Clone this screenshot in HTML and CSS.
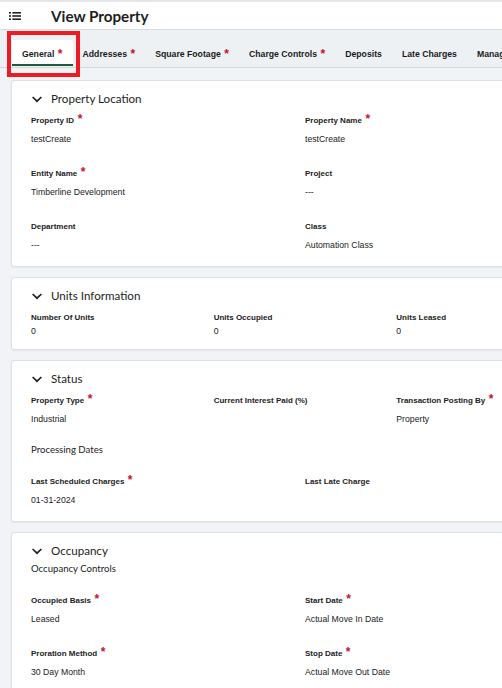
FILE: index.html
```html
<!DOCTYPE html>
<html lang="en">
<head>
<meta charset="utf-8">
<title>View Property</title>
<link rel="stylesheet" href="styles.css">
</head>
<body>
<header class="topbar">
  <button class="menu-btn" type="button" aria-label="Menu">
    <svg width="12" height="8" viewBox="0 0 12 8" aria-hidden="true">
      <rect x="0" y="0" width="2" height="1.6" fill="#222"/>
      <rect x="3.4" y="0" width="8.6" height="1.6" fill="#222"/>
      <rect x="0" y="3.2" width="2" height="1.6" fill="#222"/>
      <rect x="3.4" y="3.2" width="8.6" height="1.6" fill="#222"/>
      <rect x="0" y="6.4" width="2" height="1.6" fill="#222"/>
      <rect x="3.4" y="6.4" width="8.6" height="1.6" fill="#222"/>
    </svg>
  </button>
  <h1 class="page-title">View Property</h1>
</header>

<nav class="tabs">
  <a class="tab is-active">General<span class="req">*</span></a>
  <a class="tab">Addresses<span class="req">*</span></a>
  <a class="tab">Square Footage<span class="req">*</span></a>
  <a class="tab">Charge Controls<span class="req">*</span></a>
  <a class="tab">Deposits</a>
  <a class="tab">Late Charges</a>
  <a class="tab">Management</a>
  <span class="tab-highlight"></span>
</nav>

<main class="content">
  <section class="card">
    <h2 class="card-title">
      <svg class="chevron" width="12" height="12" viewBox="0 0 12 12" aria-hidden="true"><polyline points="1.6,4 6,8.2 10.4,4" fill="none" stroke="#222" stroke-width="1.7"/></svg>
      Property Location
    </h2>
    <div class="fields">
      <div class="field"><div class="label">Property ID<span class="req">*</span></div><div class="value">testCreate</div></div>
      <div class="field"><div class="label">Property Name<span class="req">*</span></div><div class="value">testCreate</div></div>
      <div class="field"><div class="label">Entity Name<span class="req">*</span></div><div class="value">Timberline Development</div></div>
      <div class="field"><div class="label">Project</div><div class="value">---</div></div>
      <div class="field"><div class="label">Department</div><div class="value">---</div></div>
      <div class="field"><div class="label">Class</div><div class="value">Automation Class</div></div>
    </div>
  </section>

  <section class="card">
    <h2 class="card-title">
      <svg class="chevron" width="12" height="12" viewBox="0 0 12 12" aria-hidden="true"><polyline points="1.6,4 6,8.2 10.4,4" fill="none" stroke="#222" stroke-width="1.7"/></svg>
      Units Information
    </h2>
    <div class="fields cols-3 stats">
      <div class="field"><div class="label">Number Of Units</div><div class="value">0</div></div>
      <div class="field"><div class="label">Units Occupied</div><div class="value">0</div></div>
      <div class="field"><div class="label">Units Leased</div><div class="value">0</div></div>
    </div>
  </section>

  <section class="card">
    <h2 class="card-title">
      <svg class="chevron" width="12" height="12" viewBox="0 0 12 12" aria-hidden="true"><polyline points="1.6,4 6,8.2 10.4,4" fill="none" stroke="#222" stroke-width="1.7"/></svg>
      Status
    </h2>
    <div class="fields cols-3">
      <div class="field"><div class="label">Property Type<span class="req">*</span></div><div class="value">Industrial</div></div>
      <div class="field"><div class="label">Current Interest Paid (%)</div><div class="value"></div></div>
      <div class="field"><div class="label">Transaction Posting By<span class="req">*</span></div><div class="value">Property</div></div>
    </div>
    <h3 class="subhead">Processing Dates</h3>
    <div class="fields">
      <div class="field"><div class="label">Last Scheduled Charges<span class="req">*</span></div><div class="value">01-31-2024</div></div>
      <div class="field"><div class="label">Last Late Charge</div><div class="value"></div></div>
    </div>
  </section>

  <section class="card">
    <h2 class="card-title">
      <svg class="chevron" width="12" height="12" viewBox="0 0 12 12" aria-hidden="true"><polyline points="1.6,4 6,8.2 10.4,4" fill="none" stroke="#222" stroke-width="1.7"/></svg>
      Occupancy
    </h2>
    <h3 class="subhead">Occupancy Controls</h3>
    <div class="fields">
      <div class="field"><div class="label">Occupied Basis<span class="req">*</span></div><div class="value">Leased</div></div>
      <div class="field"><div class="label">Start Date<span class="req">*</span></div><div class="value">Actual Move In Date</div></div>
      <div class="field"><div class="label">Proration Method<span class="req">*</span></div><div class="value">30 Day Month</div></div>
      <div class="field"><div class="label">Stop Date<span class="req">*</span></div><div class="value">Actual Move Out Date</div></div>
    </div>
  </section>
</main>
</body>
</html>
```

FILE: styles.css
```css
* {
  box-sizing: border-box;
  margin: 0;
  padding: 0;
}

html,
body {
  overflow: hidden;
}

body {
  background: #f1f3f6;
  color: #222;
  font-family: "Liberation Sans", Arial, sans-serif;
}

/* Top application bar */
.topbar {
  height: 30px;
  display: flex;
  align-items: center;
  padding-left: 9px;
  background: #fff;
  border-top: 2px solid #e3e5e8;
  border-bottom: 1px solid #d8dce1;
}

.menu-btn {
  display: flex;
  width: 12px;
  height: 8px;
  border: 0;
  background: none;
}

.page-title {
  margin-left: 30px;
  font: 700 15.2px/20px Lato, "Open Sans", sans-serif;
  color: #1d1d1d;
}

/* Tab strip */
.tabs {
  position: relative;
  display: flex;
  height: 38px;
  padding: 10px 0 0 12px;
  background: #eef1f4;
  border-bottom: 1px solid #d4d9df;
}

.tab {
  display: flex;
  align-items: center;
  height: 26px;
  padding: 2px 10px 0;
  font: 700 8.7px/1 "Liberation Sans", Arial, sans-serif;
  color: #1a1a1a;
  white-space: nowrap;
  border-radius: 3px 3px 0 0;
}

.tab.is-active {
  background: #fff;
  box-shadow: inset 0 -2px 0 #1f5a3d;
}

.tab-highlight {
  position: absolute;
  left: 7px;
  top: 1px;
  width: 73px;
  height: 46px;
  border: 4px solid #ec1c24;
  z-index: 2;
}

/* Required marker */
.req {
  margin-left: 3.5px;
  font: 700 12px/0 "Liberation Sans", Arial, sans-serif;
  color: #c8102e;
  vertical-align: 0;
}

/* Content cards */
.content {
  width: 620px;
  padding: 12px 0 12px 11px;
}

.card {
  width: 588px;
  margin-bottom: 10px;
  padding: 10px 19px 0;
  background: #fff;
  border: 1px solid #dce1e8;
  border-radius: 3px;
  box-shadow: 0 1px 2px rgba(30, 40, 60, 0.06);
}

.card-title {
  display: flex;
  align-items: center;
  gap: 8px;
  height: 15px;
  font: 400 11.6px/15px Lato, "Open Sans", sans-serif;
  color: #1d1d1d;
}

.chevron {
  flex: none;
}

.fields {
  display: grid;
  grid-template-columns: repeat(2, 1fr);
  row-gap: 22px;
  margin: 8px 0 15px;
}

.fields.cols-3 {
  grid-template-columns: repeat(3, 1fr);
}

.fields.stats {
  margin-bottom: 12px;
}

.label {
  font: 700 8px/13px "Liberation Sans", Arial, sans-serif;
  color: #222;
  white-space: nowrap;
}

.value {
  min-height: 12px;
  margin-top: 6px;
  font: 400 8.7px/12px "Liberation Sans", Arial, sans-serif;
  color: #222;
}

.stats .value {
  margin-top: 1px;
}

.subhead {
  margin: 18px 0 18px;
  font: 400 9.6px/14px Lato, "Open Sans", sans-serif;
  color: #222;
}

.card-title + .subhead {
  margin-top: 3.5px;
}
```
